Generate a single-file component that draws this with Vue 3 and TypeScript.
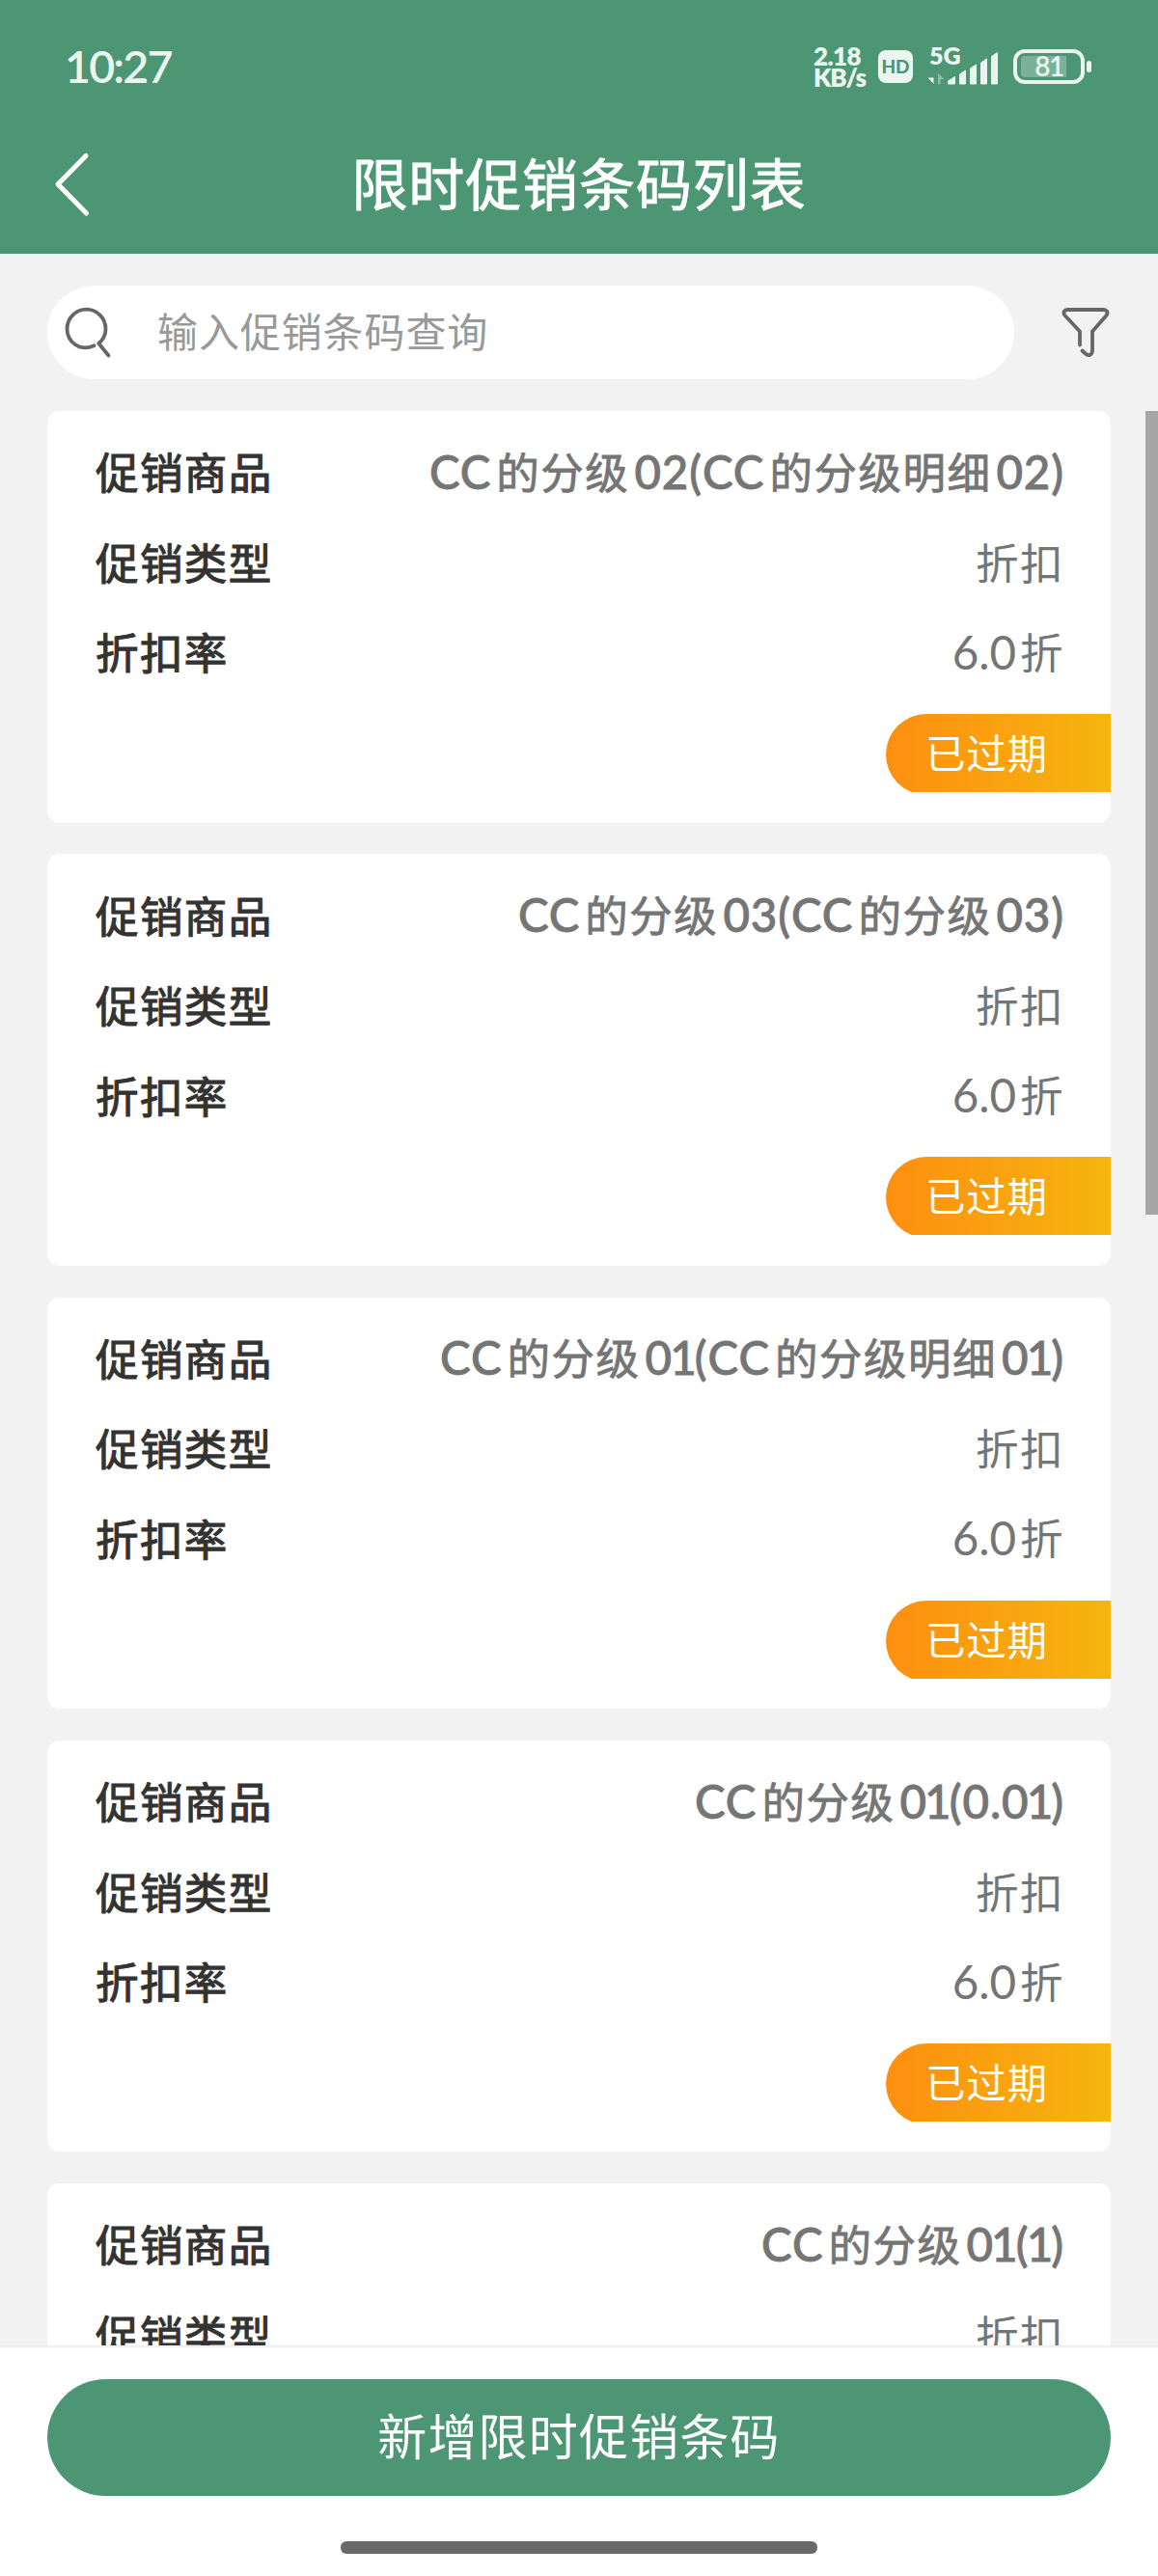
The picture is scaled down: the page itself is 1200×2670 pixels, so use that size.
<script setup lang="ts">
interface Promotion {
  product: string
  type: string
  rate: string
  status: string
}

interface Segment {
  text: string
  latin: boolean
}

const promotions: Promotion[] = [
  { product: 'CC的分级02(CC的分级明细02)', type: '折扣', rate: '6.0折', status: '已过期' },
  { product: 'CC的分级03(CC的分级03)', type: '折扣', rate: '6.0折', status: '已过期' },
  { product: 'CC的分级01(CC的分级明细01)', type: '折扣', rate: '6.0折', status: '已过期' },
  { product: 'CC的分级01(0.01)', type: '折扣', rate: '6.0折', status: '已过期' },
  { product: 'CC的分级01(1)', type: '折扣', rate: '6.0折', status: '已过期' },
]

const rowsOf = (p: Promotion) => [
  { label: '促销商品', value: p.product, strong: true },
  { label: '促销类型', value: p.type, strong: false },
  { label: '折扣率', value: p.rate, strong: false },
]

// Latin runs get their own face and a small gap next to Chinese runs
const segments = (value: string): Segment[] =>
  (value.match(/[\x20-\x7e]+|[^\x20-\x7e]+/g) ?? []).map((text) => ({
    text,
    latin: /^[\x20-\x7e]/.test(text),
  }))

// The digit 1 is set tighter than the other figures
const pieces = (text: string): string[] => text.split(/(1)/).filter(Boolean)
</script>

<template>
  <div class="screen">
    <header class="header">
      <div class="status">
        <span class="time">10:27</span>
        <div class="indicators">
          <div class="speed"><span>2.18</span><span>KB/s</span></div>
          <div class="hd">HD</div>
          <div class="signal">
            <span class="net">5G</span>
            <svg width="76" height="40" viewBox="0 0 76 40">
              <path d="M6.500 26.500V38L0.500 31.500H6.500z" fill="#ebf5ef" />
              <path d="M11 38.500V26.500L17.500 33H13.500V38.500z" fill="#ebf5ef" class="dim" />
              <path d="M21.500 38v-3l7-4.500v7.500zM33.500 38v-10l6-4v14zM44.500 38v-16l6-4v20zM55.500 38v-22l6-4v26zM66.500 38v-28.500l6-4v32.500z" fill="#ebf5ef" stroke="#ebf5ef" stroke-width="1" stroke-linejoin="round" />
            </svg>
          </div>
          <div class="battery"><i class="level"></i><b>81</b></div>
          <i class="nub"></i>
        </div>
      </div>
      <div class="nav">
        <svg class="back" width="40" height="70" viewBox="0 0 40 70">
          <path d="M34 5.500L5 35l29.500 30" fill="none" stroke="#fff" stroke-width="5" stroke-linecap="round" stroke-linejoin="round" />
        </svg>
        <h1>限时促销条码列表</h1>
      </div>
    </header>

    <div class="search">
      <div class="field">
        <svg width="52" height="56" viewBox="0 0 52 56">
          <path d="M33.600 41.200C19 48 5.500 37.500 5.500 24A20 20.300 0 0 1 45.500 24C45.500 30 43 35 38.300 39L48.500 51.500" fill="none" stroke="#666" stroke-width="3.800" stroke-linecap="round" stroke-linejoin="round" />
        </svg>
        <span>输入促销条码查询</span>
      </div>
      <svg class="filter" width="54" height="56" viewBox="0 0 54 56">
        <path d="M21 40.500V26.500L5.500 10Q3.500 7.500 5 5.500Q6.200 4 8.500 4H45.500Q48 4 49.200 5.700Q50.300 7.700 48.500 10L34 26.500V46C34 51 30 52.300 27 49.800L23.500 46.500" fill="none" stroke="#666" stroke-width="3.800" stroke-linecap="round" stroke-linejoin="round" />
      </svg>
    </div>

    <main class="list">
      <article v-for="(p, i) in promotions" :key="i" class="card">
        <div v-for="row in rowsOf(p)" :key="row.label" class="row">
          <span class="label">{{ row.label }}</span>
          <span class="value" :class="{ strong: row.strong }"><span v-for="(s, j) in segments(row.value)" :key="j" :class="s.latin ? 'latin' : 'han'"><span v-for="(t, k) in pieces(s.text)" :key="k" :class="{ one: t === '1' }">{{ t }}</span></span></span>
        </div>
        <div class="badge"><div class="pill">{{ p.status }}</div></div>
      </article>
      <i class="scrollbar"></i>
    </main>

    <footer class="footer">
      <button type="button"><span>新增限时促销条码</span></button>
      <i class="home"></i>
    </footer>
  </div>
</template>

<style>
body {
  margin: 0;
}
</style>

<style scoped>
.screen {
  width: 1200px;
  height: 2670px;
  overflow: hidden;
  display: flex;
  flex-direction: column;
  background: #f2f2f2;
  font-family: 'Noto Sans CJK SC', sans-serif;
}

.header {
  flex: none;
  height: 263px;
  background: #4d9674;
  color: #fff;
}

.status {
  height: 120px;
  box-sizing: border-box;
  padding: 18px 69px 0 67px;
  display: flex;
  justify-content: space-between;
  align-items: center;
  color: #ebf5ef;
  font-family: Lato, sans-serif;
}

.time {
  font-size: 46.5px;
  line-height: 56px;
  padding-bottom: 3px;
  font-weight: 600;
  letter-spacing: -1.8px;
}

.indicators {
  display: flex;
  align-items: center;
}

.speed {
  width: 67px;
  display: flex;
  flex-direction: column;
  font-size: 26px;
  line-height: 22.5px;
  font-weight: 800;
  letter-spacing: -0.6px;
}

.speed span:last-child {
  letter-spacing: -1.2px;
}

.hd {
  width: 36px;
  height: 34px;
  border-radius: 8px;
  background: #ebf5ef;
  color: #4d9674;
  font-size: 19px;
  line-height: 34px;
  font-weight: 900;
  text-align: center;
}

.signal {
  position: relative;
  width: 76px;
  height: 40px;
  margin: 0 13px 0 15px;
}

.signal svg {
  display: block;
}

.net {
  position: absolute;
  left: 2px;
  top: -5px;
  font-size: 25px;
  line-height: 26px;
  font-weight: 800;
}

.dim {
  opacity: 0.4;
}

.battery {
  position: relative;
  box-sizing: border-box;
  width: 74px;
  height: 36px;
  border: 4px solid #ebf5ef;
  border-radius: 12px;
  text-align: center;
}

.battery b {
  position: relative;
  font-size: 28px;
  line-height: 27px;
  font-weight: 600;
  letter-spacing: -1.5px;
  display: block;
}

.level {
  position: absolute;
  left: 4px;
  top: 3px;
  width: 47px;
  height: 22px;
  border-radius: 4px 0 0 4px;
  background: rgba(255, 255, 255, 0.26);
}

.nub {
  width: 5px;
  height: 12px;
  margin-left: 2px;
  border-radius: 3px;
  background: #ebf5ef;
}

.nav {
  height: 143px;
  position: relative;
  display: flex;
  justify-content: center;
  align-items: center;
}

.back {
  position: absolute;
  left: 55px;
  top: 36px;
}

h1 {
  margin: 0;
  padding-bottom: 7px;
  font-size: 58px;
  letter-spacing: 0.9px;
  line-height: 80px;
  font-weight: 400;
  -webkit-text-stroke: 0.9px #fff;
}

.search {
  flex: none;
  height: 163px;
  padding: 0 48px 0 49px;
  display: flex;
  align-items: center;
  justify-content: space-between;
}

.field {
  width: 1002px;
  height: 97px;
  box-sizing: border-box;
  padding-left: 15px;
  border-radius: 49px;
  background: #fff;
  display: flex;
  align-items: center;
  gap: 47px;
  color: #999;
  font-size: 42px;
  letter-spacing: 0.9px;
}

.field span {
  padding-bottom: 6px;
}

.list {
  position: relative;
  flex: 1;
  min-height: 0;
  overflow: hidden;
  padding: 0 49px;
}

.card {
  height: 426.5px;
  box-sizing: border-box;
  margin-bottom: 32.75px;
  padding-top: 15.5px;
  border-radius: 13px;
  background: #fff;
}

.row {
  height: 93.5px;
  padding: 0 48px 0 50px;
  display: flex;
  justify-content: space-between;
  align-items: center;
  font-size: 44.5px;
  line-height: 64px;
}

.label {
  color: #333;
  letter-spacing: 1.4px;
  -webkit-text-stroke: 1.1px #333;
}

.value {
  color: #757575;
}

.han {
  letter-spacing: 1.5px;
}

.strong {
  -webkit-text-stroke: 0.8px #757575;
}

.latin {
  font-family: Lato, sans-serif;
  font-size: 47.5px;
  margin: 0 4px;
}

.strong .latin {
  margin: 0 5px;
  font-weight: 500;
  letter-spacing: 0.9px;
}

.one {
  margin: 0 -2.8px;
}

.latin:first-child,
.strong .latin:first-child {
  margin-left: 0;
}

.latin:last-child,
.strong .latin:last-child {
  margin-right: 0;
}

.badge {
  width: 233px;
  height: 81px;
  margin: 18px 0 0 auto;
  overflow: hidden;
}

.pill {
  height: 84px;
  box-sizing: border-box;
  padding-left: 41px;
  border-radius: 42px 0 0 42px;
  background: linear-gradient(90deg, #fd8f10, #f6b50f);
  color: #fff;
  font-size: 41.5px;
  letter-spacing: 0.8px;
  line-height: 79px;
}

.scrollbar {
  position: absolute;
  right: 0;
  top: 0;
  width: 13px;
  height: 833px;
  background: #a6a6a6;
}

.footer {
  flex: none;
  height: 239px;
  box-sizing: border-box;
  border-top: 2px solid #eee;
  padding: 33px 49px 0;
  background: #fff;
  display: flex;
  flex-direction: column;
  align-items: center;
}

button {
  width: 100%;
  height: 121px;
  padding: 0 0 6px;
  border: 0;
  border-radius: 61px;
  background: #4d9674;
  color: #fff;
  font: 400 51px/115px 'Noto Sans CJK SC', sans-serif;
  letter-spacing: 1.2px;
}

.home {
  width: 494px;
  height: 13px;
  margin-top: 47px;
  border-radius: 6px;
  background: #696969;
}
</style>
